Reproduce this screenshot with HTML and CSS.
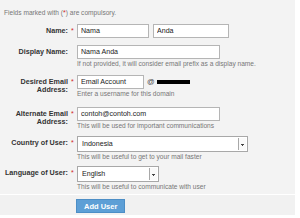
FILE: index.html
```html
<!DOCTYPE html>
<html lang="id">
<head>
    <meta charset="UTF-8">
    <title>Add User</title>
    <link rel="stylesheet" href="styles.css">
</head>
<body>

<div class="panel">
    <p class="note">Fields marked with (<span class="req">*</span>) are compulsory.</p>
    <form class="user-form">
        <div class="row">
            <label class="lbl" for="firstName">Name:</label><span class="req">*</span>
            <div class="field">
                <div class="inline">
                    <input type="text" id="firstName" class="txt w-first" value="Nama">
                    <input type="text" id="lastName" class="txt w-last" value="Anda">
                </div>
            </div>
        </div>
        <div class="row">
            <label class="lbl" for="displayName">Display Name:</label><span></span>
            <div class="field">
                <input type="text" id="displayName" class="txt w-wide" value="Nama Anda">
                <div class="hint">If not provided, it will consider email prefix as a display name.</div>
            </div>
        </div>
        <div class="row row-loose">
            <label class="lbl" for="emailAccount">Desired Email Address:</label><span class="req">*</span>
            <div class="field">
                <div class="inline">
                    <input type="text" id="emailAccount" class="txt w-short" value="Email Account">
                    <span class="at">@</span><span class="domain"></span>
                </div>
                <div class="hint">Enter a username for this domain</div>
            </div>
        </div>
        <div class="row row-snug">
            <label class="lbl" for="altEmail">Alternate Email Address:</label><span class="req">*</span>
            <div class="field">
                <input type="text" id="altEmail" class="txt w-wide" value="contoh@contoh.com">
                <div class="hint">This will be used for important communications</div>
            </div>
        </div>
        <div class="row row-tight">
            <label class="lbl" for="country">Country of User:</label><span class="req">*</span>
            <div class="field">
                <div class="pick w-country">
                    <select id="country"><option>Indonesia</option></select>
                </div>
                <div class="hint">This will be useful to get to your mail faster</div>
            </div>
        </div>
        <div class="row row-last">
            <label class="lbl" for="language">Language of User:</label><span class="req">*</span>
            <div class="field">
                <div class="pick w-lang">
                    <select id="language"><option>English</option></select>
                </div>
                <div class="hint">This will be useful to communicate with user</div>
            </div>
        </div>
    </form>
    <div class="actions">
        <button type="button" class="btn-add">Add User</button>
    </div>
</div>

</body>
</html>
```

FILE: styles.css
```css
body {
    margin: 0;
    background-color: #fff;
    font-family: "Liberation Sans", Arial, sans-serif;
    font-size: 7px;
    line-height: 8px;
    color: #333;
}
.panel {
    width: 295px;
    background-color: #f3f3f3;
}
.note {
    margin: 0;
    padding: 9px 0 7px 4px;
    font-size: 6.6px;
    line-height: 8px;
    color: #777;
}
.req {
    color: #d21f1f;
    font-size: 7px;
}
.user-form {
    padding-bottom: 3px;
}
.row {
    display: grid;
    grid-template-columns: 68px 8px 1fr;
    margin-bottom: 7px;
}
.row-loose { margin-bottom: 9px; }
.row-snug { margin-bottom: 6px; }
.row-tight { margin-bottom: 5px; }
.row-last { margin-bottom: 0; }
.row .req {
    padding: 3px 0 0 3px;
    line-height: 7px;
}
.lbl {
    text-align: right;
    font-weight: bold;
    font-size: 7.2px;
    line-height: 8px;
    padding-top: 3px;
    color: #333;
}
.field {
    display: flex;
    flex-direction: column;
    align-items: flex-start;
    padding-left: 1px;
}
.txt {
    display: block;
    box-sizing: border-box;
    height: 14px;
    margin: 0;
    padding: 0 3px;
    border: 1px solid #b5b5b5;
    background-color: #fff;
    font-family: "Liberation Sans", Arial, sans-serif;
    font-size: 7.1px;
    color: #222;
}
.w-first { width: 72px; }
.w-last { width: 76px; margin-left: 4px; }
.w-wide { width: 143px; }
.w-short { width: 67px; }
.inline {
    display: flex;
    align-items: center;
}
.at {
    font-size: 7.5px;
    margin: 0 2px 0 3px;
    color: #444;
}
.domain {
    display: block;
    width: 33px;
    height: 4px;
    background-color: #000;
}
.hint {
    margin-top: 1px;
    font-size: 6.6px;
    line-height: 8px;
    color: #777;
}
.pick {
    position: relative;
    box-sizing: border-box;
    height: 16px;
    border: 1px solid #a8a8a8;
    background-color: #fff;
}
.pick select {
    display: block;
    appearance: none;
    -webkit-appearance: none;
    width: 100%;
    height: 14px;
    margin: 0;
    padding: 0 0 0 4px;
    border: 0;
    background: transparent;
    font-family: "Liberation Sans", Arial, sans-serif;
    font-size: 7.1px;
    color: #222;
    outline: none;
}
.pick::after {
    content: "";
    position: absolute;
    top: 1px;
    right: 1px;
    width: 7px;
    height: 12px;
    border-left: 1px solid #a8a8a8;
    background: linear-gradient(#444, #444) no-repeat 2px 6px / 3px 1px,
                linear-gradient(#444, #444) no-repeat 3px 7px / 1px 1px,
                #fafafa;
}
.w-country { width: 171px; }
.w-lang { width: 82px; }
.actions {
    border-top: 1px solid #fff;
    background-color: #f1f1f1;
    padding: 4px 0 2px 76px;
}
.btn-add {
    display: block;
    height: 14px;
    padding: 0 7px;
    border: 1px solid #4c8ec6;
    background-color: #5d9fd6;
    color: #fff;
    font-family: "Liberation Sans", Arial, sans-serif;
    font-weight: bold;
    font-size: 7.5px;
    cursor: pointer;
}
```
